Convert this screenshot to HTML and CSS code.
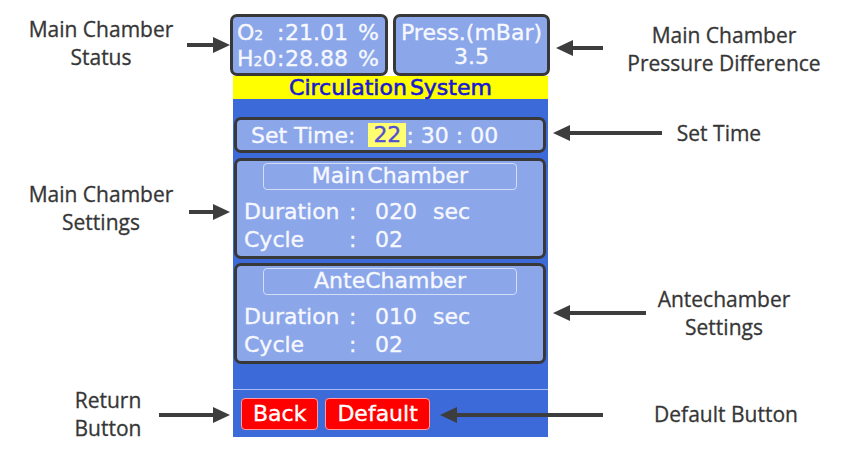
FILE: index.html
```html
<!DOCTYPE html>
<html lang="en">
<head>
    <meta charset="UTF-8">
    <meta name="viewport" content="width=device-width, initial-scale=1.0">
    <title>Circulation System</title>
    <link rel="stylesheet" href="styles.css">
</head>
<body>

<div class="figure">
    <div class="screen">
        <div class="status-row">
            <div class="status-box gas">
                <div class="gas-line"><span>O<span class="sub">2</span></span><span>:</span><span>21.01</span><span>%</span></div>
                <div class="gas-line"><span>H<span class="sub">2</span>0</span><span>:</span><span>28.88</span><span>%</span></div>
            </div>
            <div class="status-box press">
                <div>Press.(mBar)</div>
                <div>3.5</div>
            </div>
        </div>
        <div class="title">Circulation System</div>

        <div class="panel">
            <div class="time-box">
                <span>Set Time:</span>
                <span class="time-edit">22</span><span class="time-rest">: 30 : 00</span>
            </div>

            <div class="chamber">
                <div class="chamber-head">Main Chamber</div>
                <div class="setting-row"><span>Duration</span><span>:</span><span>020</span><span>sec</span></div>
                <div class="setting-row"><span>Cycle</span><span>:</span><span>02</span><span></span></div>
            </div>

            <div class="chamber ante">
                <div class="chamber-head">AnteChamber</div>
                <div class="setting-row"><span>Duration</span><span>:</span><span>010</span><span>sec</span></div>
                <div class="setting-row"><span>Cycle</span><span>:</span><span>02</span><span></span></div>
            </div>

            <div class="separator"></div>

            <div class="buttons">
                <button class="btn">Back</button>
                <button class="btn">Default</button>
            </div>
        </div>
    </div>

    <!-- callouts -->
    <div class="note left" style="top: 15px;">Main Chamber<br>Status</div>
    <div class="note left" style="top: 180px;">Main Chamber<br>Settings</div>
    <div class="note left return" style="top: 386px;">Return<br>Button</div>

    <div class="note right" style="top: 21px;">Main Chamber<br>Pressure Difference</div>
    <div class="note right time" style="top: 119px;">Set Time</div>
    <div class="note right" style="top: 285px;">Antechamber<br>Settings</div>
    <div class="note right default" style="top: 400px;">Default Button</div>

    <svg class="arrows" width="848" height="458" viewBox="0 0 848 458">
        <g stroke="#3d3d3d" stroke-width="4">
            <line x1="187" y1="45" x2="215" y2="45"/>
            <line x1="189" y1="212" x2="215" y2="212"/>
            <line x1="159" y1="415" x2="215" y2="415"/>
            <line x1="571" y1="48" x2="603" y2="48"/>
            <line x1="568" y1="133" x2="662" y2="133"/>
            <line x1="568" y1="313" x2="646" y2="313"/>
            <line x1="455" y1="415" x2="603" y2="415"/>
        </g>
        <g fill="#3d3d3d">
            <polygon points="230,45 213,37 213,53"/>
            <polygon points="230,212 213,204 213,220"/>
            <polygon points="230,415 213,407 213,423"/>
            <polygon points="556,48 573,40 573,56"/>
            <polygon points="553,133 570,125 570,141"/>
            <polygon points="553,313 570,305 570,321"/>
            <polygon points="440,415 457,407 457,423"/>
        </g>
    </svg>
</div>

</body>
</html>
```

FILE: styles.css
```css
/* Page and figure */
body {
    margin: 0;
    background-color: #ffffff;
    font-family: "Open Sans", sans-serif;
}

.figure {
    position: relative;
    width: 848px;
    height: 458px;
    overflow: hidden;
}

/* LCD screen */
.screen {
    width: 320px;
    margin-left: 230px;
    padding-top: 14px;
    font-family: "DejaVu Sans", sans-serif;
    font-size: 22px;
    color: #f6f8ff;
    -webkit-text-stroke: 0.35px currentColor;
}

.status-row {
    display: flex;
    gap: 5px;
    height: 62px;
}

.status-box {
    box-sizing: border-box;
    height: 62px;
    border: 3px solid #383838;
    border-radius: 7px;
    background-color: #8ba6e9;
    padding: 4px 6px 0 4px;
    line-height: 24px;
}

.status-box.gas {
    width: 158px;
}

.status-box.press {
    width: 157px;
    padding: 4px 0 0;
    text-align: center;
}

.gas-line {
    display: grid;
    grid-template-columns: 40px 8px 1fr auto;
}

.sub {
    font-size: 14px;
}

.title {
    margin: 0 2px 0 3px;
    height: 23px;
    background-color: #ffff00;
    color: #1a1ad2;
    text-align: center;
    line-height: 23px;
    word-spacing: -4px;
    -webkit-text-stroke: 0.6px currentColor;
}

.panel {
    box-sizing: border-box;
    height: 338px;
    margin: 0 2px 0 3px;
    padding: 18px 2px 7px 1px;
    background-color: #3c6ad9;
    display: flex;
    flex-direction: column;
}

.time-box,
.chamber {
    box-sizing: border-box;
    border: 3px solid #383838;
    border-radius: 7px;
    background-color: #8ba6e9;
}

.time-box {
    height: 36px;
    display: flex;
    align-items: center;
    padding-left: 14px;
    white-space: pre;
}

.time-edit {
    margin-left: 13px;
    padding: 0 5px;
    height: 24px;
    line-height: 24px;
    background-color: #ffff70;
    color: #5050d2;
}

.chamber {
    height: 101px;
    margin-top: 5px;
    padding: 2px 0 0 7px;
}

.chamber.ante {
    margin-top: 4px;
}

.chamber-head {
    box-sizing: border-box;
    width: 254px;
    height: 27px;
    margin: 0 0 8px 19px;
    border: 1.5px solid #d3ddf8;
    border-radius: 4px;
    text-align: center;
    line-height: 24px;
    word-spacing: -4px;
}

.setting-row {
    display: grid;
    grid-template-columns: 105px 26px 58px auto;
    line-height: 28px;
}

.separator {
    height: 1px;
    margin: 25px -2px 0 -1px;
    background-color: #a9bdf2;
}

.buttons {
    display: flex;
    gap: 7px;
    margin: 8px 0 0 7px;
}

.btn {
    box-sizing: border-box;
    height: 32px;
    padding: 0 11px;
    border: 1px solid #ff9c9c;
    border-radius: 4px;
    background-color: #ff0000;
    color: #ffffff;
    font-family: "DejaVu Sans", sans-serif;
    font-size: 22px;
    line-height: 30px;
    -webkit-text-stroke: 0.35px currentColor;
}

/* Callouts */
.note {
    position: absolute;
    width: 200px;
    font-size: 21px;
    line-height: 28px;
    color: #363636;
    text-align: center;
    -webkit-text-stroke: 0.3px currentColor;
}

.note.left {
    left: 1px;
}

.note.left.return {
    left: 8px;
}

.note.right {
    left: 624px;
}

.note.right.time {
    left: 619px;
}

.note.right.default {
    left: 626px;
}

.arrows {
    position: absolute;
    top: 0;
    left: 0;
    pointer-events: none;
}
```
